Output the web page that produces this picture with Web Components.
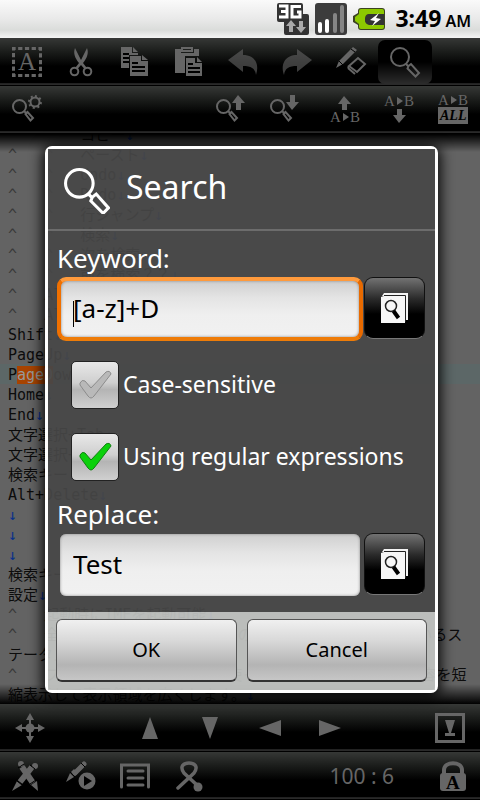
<!DOCTYPE html>
<html lang="en">
<head>
<meta charset="utf-8">
<meta name="viewport" content="width=device-width, initial-scale=1">
<title>Search</title>
<style>
html, body {
    height: 100%;
    margin: 0;
}
body {
    background-color: #000;
    font-family: "Noto Sans", "Open Sans", "Noto Sans CJK JP", sans-serif;
}
</style>
</head>
<body>
<editor-app></editor-app>

<script>
// every toolbar icon lives in a 30x30 box and takes the current colour
const GLASS = `<circle cx="10" cy="10" r="9"/><path d="M16 17l2 2M18.500 19l2.500-2 8 9-3.500 3.500-8-8z"/>`;
const SMALL_GLASS = `<g transform="translate(0 4)"><circle cx="7.500" cy="7.500" r="6.500"/><path d="M12 12l2 2M13.500 15l2-2 5.500 6-2.500 2.500z"/></g>`;
const A_TO_B = y => `<g class="fill"><text x="0" y="${y}" font-size="15">A</text><text x="20" y="${y}" font-size="15">B</text><path d="M13 ${y - 9}l6 4-6 4z"/></g>`;

const ICONS = {
    select: `<rect x="1.500" y="1.500" width="27" height="27" stroke-width="3" stroke-dasharray="4.250 2.500" stroke-dashoffset="2.100"/><g class="fill"><text x="6" y="23" font-size="25">A</text></g>`,
    cut: `<circle cx="8.500" cy="24.500" r="3.800"/><circle cx="21.500" cy="24.500" r="3.800"/><path class="fill" d="M9 1C7 6 9 11 13 16L9.500 20.500l2 1.500L15 18l3.500 4 2-1.500L17 16C21 11 23 6 21 1L15 13z"/>`,
    copy: `<path class="fill" d="M1 0h11v6h6v2h-9v13H1z"/><path class="fill" d="M13 0l5 5h-5zM10 9h11v5h7v15H10z"/><path class="fill" d="M22 8l6 5h-6z"/><path class="cut" d="M3 7h6M3 11h6M3 15h6M12 16h6M12 20h13M12 24h13"/>`,
    paste: `<path class="fill" d="M1 2h6v4h13V2h5v7H11v17H1z"/><path d="M8 1h10v3H8z"/><path class="fill" d="M12 11h9v5h7v13H12z"/><path class="fill" d="M23 10l5 5h-5z"/><path class="cut" d="M14 17h5M14 21h12M14 25h12"/>`,
    undo: `<path class="fill dim" d="M0 13L15 2v6c11 0 17 8 13 20-1-7-5-9-13-9v6z"/>`,
    redo: `<path class="fill dim" d="M30 13L15 2v6C4 8-2 16 2 28c1-7 5-9 13-9v6z"/>`,
    erase: `<path class="fill" d="M0 21l3-7L17 0l4 3L7 17z"/><path class="cut thin" d="M3 14l4 4M15 2l4 3"/><path d="M13 19l9-8 7 6-8 8zM12 21l7 6M12 21l1-2"/>`,
    search: GLASS,
    searchSettings: SMALL_GLASS + `<circle cx="23" cy="7" r="4.500"/><path stroke-width="2" stroke-dasharray="2 2.700" d="M23 1a6 6 0 1 1-.1 0"/>`,
    searchUp: SMALL_GLASS + `<path class="fill" d="M22 0l7 8h-4v7h-5V8h-4z"/>`,
    searchDown: SMALL_GLASS + `<path class="fill" d="M22 15l7-8h-4V0h-5v7h-4z"/>`,
    replaceUp: `<path class="fill" d="M14 1l7 8h-4v6h-5V9H8z"/>` + A_TO_B(27),
    replaceDown: A_TO_B(11) + `<path class="fill" d="M15 28l7-8h-4v-6h-5v6H9z"/>`,
    replaceAll: A_TO_B(10) + `<path class="fill" d="M0 12h30v17H0z"/><text class="dark" x="2" y="25" font-size="14" font-weight="bold" font-style="italic">ALL</text>`,
    move: `<circle class="fill" cx="15" cy="15" r="4.500"/><path d="M15 4v22M4 15h22"/><path class="fill" d="M15 0l4 7h-8zM15 30l4-7h-8zM0 15l7-4v8zM30 15l-7-4v8z"/>`,
    up: `<path class="fill" d="M15 4l8 22H7z"/>`,
    down: `<path class="fill" d="M15 26L23 4H7z"/>`,
    left: `<path class="fill" d="M4 15l22-8v16z"/>`,
    right: `<path class="fill" d="M26 15L4 7v16z"/>`,
    toBottom: `<path stroke-width="3" d="M1.500 1.500h27v27h-27z"/><path class="fill" d="M10 7h10l-4 13h4v3H10v-3h4z"/>`,
    pens: `<path stroke-width="6" d="M20 6L8 21"/><path class="fill" d="M10 24l-5-4-5 10z"/><path stroke-width="6" d="M10 6l11 16"/><path class="fill" d="M19 24l6-4 1 10z"/><circle class="fill" cx="9" cy="3" r="3"/><circle class="fill" cx="23" cy="5" r="3"/><path class="cut thin" d="M6 7l6-4M18 4l5 4M5 20l5 4M18 23l6-4"/>`,
    macroPlay: `<path stroke-width="5" stroke-linecap="round" d="M18 3L9 12"/><path class="fill" d="M0 21l4-9 4 4z"/><path class="fill" d="M5 11l4 4 3-3-4-4z"/><path class="cut thin" d="M4 11l5 5M15 2l4 4"/><circle class="fill" cx="21" cy="20" r="8.500"/><path class="dark" d="M18 15l8 5-8 5z"/>`,
    list: `<path stroke-width="3" stroke-linecap="round" d="M1.500 26V4h27v22M8 10h15M8 17h15M8 24h15"/>`,
    ribbon: `<path stroke-width="3.500" stroke-linecap="round" d="M4 27L20 12C25 5 20 2 15 2S5 5 10 12l14 13"/><circle class="fill" cx="24" cy="26" r="4.500"/>`,
    lock: `<path stroke-width="4" d="M6 14V9c0-9 18-9 18 0v5"/><rect class="fill" x="2" y="12" width="26" height="18" rx="3"/><text class="dark" x="8" y="28" font-size="19" font-weight="bold">A</text>`
};

class BarButton extends HTMLElement {
    constructor() {
        super();
        this.attachShadow({mode: "open"});
    }

    connectedCallback() {
        this.shadowRoot.innerHTML = `
<style>
:host {
    display: block;
    width: 54px;
    height: 44px;
    color: #666;
}
button {
    display: grid;
    place-items: center;
    width: 100%;
    height: 100%;
    padding: 0;
    border: none;
    border-radius: 7px;
    background: none;
    color: inherit;
}
:host([active]) button {
    background: linear-gradient(#000 50%, #2c2c2c);
}
svg {
    overflow: visible;
    fill: none;
    stroke: currentColor;
    stroke-width: 2;
    font-family: "Liberation Serif", serif;
}
.fill { fill: currentColor; stroke: none; }
.dark { fill: #000; stroke: none; }
.cut { stroke: #000; stroke-width: 2; }
.thin { stroke-width: 1; }
.dim { opacity: 0.6; }
</style>
<button type="button" aria-label="${this.getAttribute("label")}">
    <svg width="30" height="30" viewBox="0 0 30 30">${ICONS[this.getAttribute("icon")]}</svg>
</button>`;
    }
}
customElements.define("bar-button", BarButton);

class ToolBar extends HTMLElement {
    constructor() {
        super();
        this.attachShadow({mode: "open"});
        this.shadowRoot.innerHTML = `
<style>
:host {
    display: flex;
    flex: none;
    align-items: center;
    box-sizing: border-box;
    height: 48px;
    border-bottom: 1px solid #000;
    background: linear-gradient(#363836, #1a1c1a 30%, #000 60%, #000 96%, #2a2a2a 97%);
}
:host([even]) {
    display: grid;
    grid-template-columns: repeat(8, 1fr);
    justify-items: center;
}
</style>
<slot></slot>`;
    }
}
customElements.define("tool-bar", ToolBar);

class StatusBar extends HTMLElement {
    constructor() {
        super();
        this.attachShadow({mode: "open"});
        this.shadowRoot.innerHTML = `
<style>
:host {
    display: flex;
    flex: none;
    align-items: center;
    justify-content: flex-end;
    gap: 6px;
    height: 38px;
    padding-right: 9px;
    background: linear-gradient(#fafafa, #e9e9e9 50%, #dadcda 80%, #f4f4f4);
    color: #000;
    font-weight: bold;
}
time {
    display: flex;
    align-items: baseline;
    gap: 4px;
    padding-left: 4px;
    font-size: 23px;
    line-height: 32px;
}
small {
    font-size: 16px;
    font-weight: 600;
}
</style>
<svg width="32" height="32" viewBox="0 0 32 32">
    <path d="M2 0h22q2 0 2 2v9h4q2 0 2 2v17q0 2-2 2H9q-2 0-2-2V19H2q-2 0-2-2V2q0-2 2-2z" fill="#333"/>
    <path d="M2 3h8v11H2M4 8.500h6M24 3.500h-9v10.500h8v-5h-3" fill="none" stroke="#fff" stroke-width="3"/>
    <path d="M14 17l5 6h-3v6h-4v-6H9zM24 30l5-6h-3v-6h-4v6h-3z" fill="#aaa"/>
</svg>
<svg width="32" height="32" viewBox="0 0 32 32">
    <rect width="32" height="32" rx="3" fill="#3c3c3c"/>
    <path d="M5 28v-7M12 28V18" stroke="#fff" stroke-width="4" stroke-linecap="round"/>
    <path d="M20 28V12M27 28V4" stroke="#858585" stroke-width="4" stroke-linecap="round"/>
</svg>
<svg width="32" height="32" viewBox="0 0 32 32">
    <path d="M8 5h21q3 0 3 3v16q0 3-3 3H8q-3 0-3-3v-2l-5-3v-6l5-3V8q0-3 3-3z" fill="#3b4220"/>
    <path d="M8 6h21q2 0 2 2v3H16q-4 0-4 5t4 5h15v3q0 2-2 2H8q-2 0-2-2v-3l-4-3v-4l4-3V8q0-2 2-2z" fill="#8cc800"/>
    <path d="M16 11h15v11H16q-4-1-4-5t4-6z" fill="#333"/>
    <path d="M26 10l-9 7 5 1-3 5 9-7-5-1z" fill="#fff"/>
</svg>
<time><span>3:49</span><small>AM</small></time>`;
    }
}
customElements.define("status-bar", StatusBar);

// [ ] marks the selection
const LINES = [
    "^\t^\tコピー↓",
    "^\t^\tペースト↓",
    "^\t^\tUndo↓",
    "^\t^\tRedo↓",
    "^\t^\t行ジャンプ↓",
    "^\t^\t検索↓",
    "^\t^\t次を検索↓",
    "^\t^\t前を検索？？↓",
    "^\tAlt↓",
    "^\tAlt↓",
    "Shift↓",
    "PageUp↓",
    "P[ageD]own↓",
    "Home↓",
    "End↓",
    "文字選択+Tab↓",
    "文字選択+Tab↓",
    "検索キー↓",
    "Alt+Delete↓",
    "↓",
    "↓",
    "↓",
    "検索キー↓",
    "設定↓",
    "^\t起動時にIMEを起動可能↓",
    "^\t全画面表示の設定です。画面の上に時計などを表示しているス",
    "テータスバーを表示します。↓",
    "^\tファイル名が長い時はIDを使って画面の上に表示する内容を短",
    "縮表示して表示領域を広くします。↓"
];

class TextView extends HTMLElement {
    constructor() {
        super();
        this.attachShadow({mode: "open"});
    }

    connectedCallback() {
        this.shadowRoot.innerHTML = `
<style>
:host {
    display: flex;
    flex: 1;
    flex-direction: column;
    justify-content: flex-end;
    min-height: 0;
    overflow: hidden;
    position: relative;
    background-color: #636363;
    color: #0c0c0c;
    font: 15px/22px "DejaVu Sans Mono", "Noto Sans CJK JP", monospace;
}
div {
    flex: none;
    height: 20px;
    padding-left: 8px;
    white-space: pre;
    tab-size: 4;
}
.current { background-color: #5c6767; }
mark { background-color: #a84300; color: #999; }
i { color: #3a3a3a; font-style: normal; }
b { color: #08308a; font-weight: normal; }
/* the text fades out under the bars */
:host::after {
    content: "";
    position: absolute;
    inset: 0;
    background: linear-gradient(#000, transparent 18px, transparent calc(100% - 20px), #000);
}
</style>` + LINES.map(line => this.row(line)).join("");
    }

    row(line) {
        const html = line
            .replace(/\^/g, "<i>^</i>")
            .replace(/↓/g, "<b>↓</b>")
            .replace("[", "<mark>")
            .replace("]", "</mark>");
        return `<div class="${line.includes("[") ? "current" : ""}">${html}</div>`;
    }
}
customElements.define("text-view", TextView);

class HistoryField extends HTMLElement {
    constructor() {
        super();
        this.attachShadow({mode: "open"});
    }

    connectedCallback() {
        const label = this.getAttribute("label");
        this.shadowRoot.innerHTML = `
<style>
:host {
    display: block;
}
label {
    display: block;
    padding-bottom: 1px;
    color: #fff;
    font-size: 26px;
    line-height: 36px;
}
.row {
    display: flex;
    align-items: flex-start;
    gap: 1px;
}
.box {
    position: relative;
    flex: 1;
    box-sizing: border-box;
    min-width: 0;
    height: 64px;
    border: 1px solid transparent;
    border-width: 1px 3px;
    border-radius: 9px;
}
:host([focused]) .box {
    border-width: 4px;
    border-color: #ff9a3c #e86a00 #ee7c08 #f07000;
    background-color: #f07a10;
}
input {
    display: block;
    box-sizing: border-box;
    width: 100%;
    height: 100%;
    padding: 0 12px 2px 13px;
    border: none;
    border-radius: 6px;
    outline: none;
    background: linear-gradient(#cfcfcf, #e4e4e4 30%, #efefef 60%, #f1f1f1);
    box-shadow: inset 0 0 3px #888;
    color: #000;
    font: inherit;
    font-size: 26px;
}
:host([focused]) input {
    padding-left: 12px;
}
.caret {
    position: absolute;
    left: 12px;
    top: 20px;
    width: 1px;
    height: 26px;
    background-color: #000;
}
:host(:not([focused])) .caret { display: none; }
button {
    flex: none;
    display: grid;
    place-items: center;
    width: 61px;
    height: 62px;
    padding: 0;
    border: 1px solid #111;
    border-bottom-color: #777;
    border-radius: 9px;
    background: linear-gradient(#727272, #2a2a2a 35%, #000 60%);
}
</style>
<label for="text">${label}</label>
<div class="row">
    <div class="box">
        <input id="text" type="text" value="${this.getAttribute("value")}">
        <span class="caret"></span>
    </div>
    <button type="button" aria-label="History">
        <svg width="28" height="30" viewBox="0 0 28 30">
            <path d="M3 0h24v27h-3V3H1z" fill="#f4f4f4"/>
            <path d="M0 4l3-1h21v27H0z" fill="#f7f7f7"/>
            <path d="M3 2.500h21.500V29" fill="none" stroke="#222"/>
            <circle cx="10" cy="13" r="5.500" fill="none" stroke="#222" stroke-width="1.500"/>
            <path d="M12.500 18l5 7" stroke="#000" stroke-width="4"/>
        </svg>
    </button>
</div>`;
    }
}
customElements.define("history-field", HistoryField);

class CheckOption extends HTMLElement {
    constructor() {
        super();
        this.attachShadow({mode: "open"});
    }

    connectedCallback() {
        this.shadowRoot.innerHTML = `
<style>
:host {
    display: block;
}
label {
    display: flex;
    align-items: center;
    gap: 4px;
    height: 72px;
    padding-left: 14px;
    color: #fff;
    font-size: 23px;
    white-space: nowrap;
}
.tick {
    display: grid;
    place-items: center;
}
.text {
    padding-bottom: 2px;
}
input, svg {
    grid-area: 1 / 1;
}
input {
    appearance: none;
    box-sizing: border-box;
    width: 48px;
    height: 48px;
    margin: 0;
    border: 1px solid #222;
    border-radius: 5px;
    background: linear-gradient(#e8e8e8, #cfcfcf 45%, #b4b4b4 60%, #d0d0d0);
}
svg {
    z-index: 1;
    pointer-events: none;
    fill: #b9b9b9;
    stroke: #8c8c8c;
}
input:checked + svg {
    fill: #0bd00b;
    stroke: #118011;
}
</style>
<label>
    <span class="tick">
        <input type="checkbox" ${this.hasAttribute("checked") ? "checked" : ""}>
        <svg width="34" height="30" viewBox="0 0 34 30"><path d="M2 13q2-4 5-2l6 7L28 2q4-2 5 2L16 26q-3 4-6 0L2 15z"/></svg>
    </span>
    <span class="text"><slot></slot></span>
</label>`;
    }
}
customElements.define("check-option", CheckOption);

class SearchDialog extends HTMLElement {
    constructor() {
        super();
        this.attachShadow({mode: "open"});
        this.shadowRoot.innerHTML = `
<style>
:host {
    display: block;
    border: 3px solid #fff;
    border-radius: 7px;
    box-shadow: 0 2px 14px 2px #000;
    color: #fff;
}
header {
    display: flex;
    align-items: center;
    gap: 16px;
    height: 80px;
    padding-left: 16px;
    border-bottom: 2px solid #6c6c6c;
    background-color: rgba(71, 71, 71, 0.93);
}
h1 {
    margin: 0;
    padding-bottom: 3px;
    font-size: 32px;
    font-weight: normal;
    line-height: 44px;
}
header svg {
    padding-top: 4px;
    fill: none;
    stroke: #fff;
    stroke-width: 2;
}
main {
    padding: 9px 10px 15px 9px;
    background-color: rgba(71, 71, 71, 0.93);
}
.options {
    padding: 8px 0 3px;
}
footer {
    display: flex;
    gap: 10px;
    padding: 7px 8px 8px;
    background-color: rgba(192, 194, 192, 0.94);
}
footer button {
    flex: 1;
    height: 63px;
    border: 1px solid #555;
    border-bottom: 2px solid #333;
    border-radius: 6px;
    background: linear-gradient(#f0f0f0, #d8d8d8 35%, #b4b4b4 75%, #c6c6c6);
    color: #000;
    font: inherit;
    font-size: 20px;
}
</style>
<header>
    <svg width="46" height="46" viewBox="0 0 30 30">${GLASS}</svg>
    <h1>Search</h1>
</header>
<main>
    <history-field label="Keyword:" value="[a-z]+D" focused></history-field>
    <div class="options">
        <check-option>Case-sensitive</check-option>
        <check-option checked>Using regular expressions</check-option>
    </div>
    <history-field label="Replace:" value="Test"></history-field>
</main>
<footer>
    <button type="button">OK</button>
    <button type="button">Cancel</button>
</footer>`;
    }
}
customElements.define("search-dialog", SearchDialog);

class EditorApp extends HTMLElement {
    constructor() {
        super();
        this.attachShadow({mode: "open"});
        this.shadowRoot.innerHTML = `
<style>
:host {
    display: flex;
    flex-direction: column;
    position: relative;
    height: 100vh;
    min-height: 700px;
    overflow: hidden;
}
.space { flex: 1; }
.gap { width: 6px; }
.position {
    padding-right: 32px;
    color: #666;
    font-size: 21px;
}
.overlay {
    position: absolute;
    inset: 38px 0 0;
    display: grid;
    align-items: center;
    padding: 0 42px 0 45px;
}
</style>
<status-bar></status-bar>
<tool-bar>
    <bar-button icon="select" label="Select"></bar-button>
    <bar-button icon="cut" label="Cut"></bar-button>
    <bar-button icon="copy" label="Copy"></bar-button>
    <bar-button icon="paste" label="Paste"></bar-button>
    <bar-button icon="undo" label="Undo"></bar-button>
    <bar-button icon="redo" label="Redo"></bar-button>
    <bar-button icon="erase" label="Edit"></bar-button>
    <bar-button icon="search" label="Search" active></bar-button>
</tool-bar>
<tool-bar>
    <bar-button icon="searchSettings" label="Search settings"></bar-button>
    <span class="space"></span>
    <bar-button icon="searchUp" label="Search up"></bar-button>
    <bar-button icon="searchDown" label="Search down"></bar-button>
    <span class="gap"></span>
    <bar-button icon="replaceUp" label="Replace up"></bar-button>
    <bar-button icon="replaceDown" label="Replace down"></bar-button>
    <bar-button icon="replaceAll" label="Replace all"></bar-button>
</tool-bar>
<text-view></text-view>
<tool-bar even>
    <bar-button icon="move" label="Move"></bar-button>
    <span></span>
    <bar-button icon="up" label="Up"></bar-button>
    <bar-button icon="down" label="Down"></bar-button>
    <bar-button icon="left" label="Left"></bar-button>
    <bar-button icon="right" label="Right"></bar-button>
    <span></span>
    <bar-button icon="toBottom" label="To bottom"></bar-button>
</tool-bar>
<tool-bar>
    <bar-button icon="pens" label="Tools"></bar-button>
    <bar-button icon="macroPlay" label="Play macro"></bar-button>
    <bar-button icon="list" label="List"></bar-button>
    <bar-button icon="ribbon" label="Ribbon"></bar-button>
    <span class="space"></span>
    <span class="position">100 : 6</span>
    <bar-button icon="lock" label="Lock"></bar-button>
</tool-bar>
<div class="overlay"><search-dialog role="dialog" aria-label="Search"></search-dialog></div>`;
    }
}
customElements.define("editor-app", EditorApp);
</script>
</body>
</html>
